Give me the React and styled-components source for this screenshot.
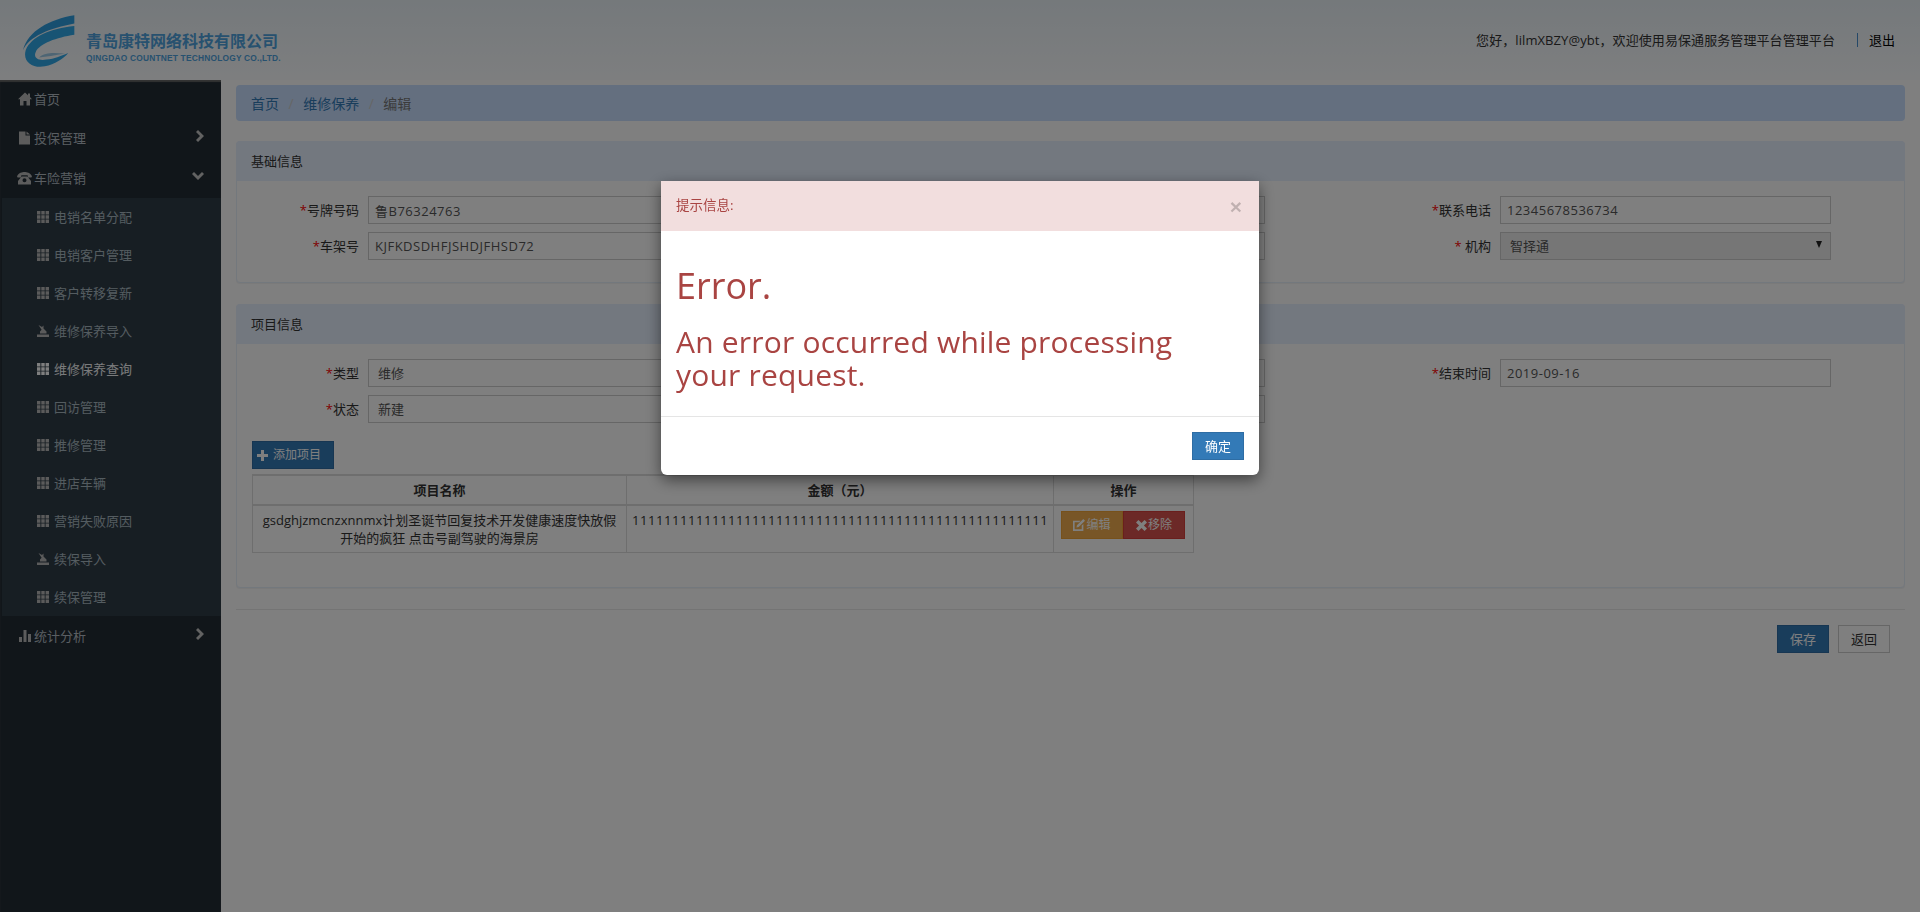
import React from 'react';
import styled, { createGlobalStyle } from 'styled-components';

const Global = createGlobalStyle`
  html, body { margin: 0; padding: 0; height: 100%; overflow: hidden; background: #fff; }
  * { box-sizing: border-box; }
  body { font: 13px/18px "Open Sans", "Noto Sans CJK SC", sans-serif; color: #333; }
`;

const Page = styled.div`height: 912px; display: flex; flex-direction: column;`;
const Header = styled.header`
  height: 80px; flex: none; display: flex; align-items: center; padding: 0 25px 0 23px;
  background: linear-gradient(#eaf2f7, #fbfdff);
`;
const LogoBox = styled.div`display: flex; align-items: center; gap: 11px; padding-top: 2px;`;
const LogoText = styled.div`display: flex; flex-direction: column; color: #4fa3df; font-weight: 700; padding-top: 11px;`;
const LogoCn = styled.span`font-size: 16px; line-height: 22px; white-space: nowrap;`;
const LogoEn = styled.span`font: 700 8.4px/12px "Liberation Sans", sans-serif; white-space: nowrap; letter-spacing: .2px;`;
const HeaderRight = styled.div`margin-left: auto; display: flex; align-items: center; white-space: nowrap;`;
const Greeting = styled.span`color: #333; letter-spacing: .08px;`;
const Divider = styled.span`width: 1px; height: 14px; background: #4a90d0; margin: 0 11px 0 22px;`;
const Logout = styled.a`color: #000;`;

const Body = styled.div`flex: 1; display: flex; min-height: 0;`;
const Sidebar = styled.nav`width: 221px; flex: none; background: #222c34; box-shadow: inset 0 2px 1px #666; color: #bcc6cc;`;
const TopItem = styled.div`
  height: ${p => p.$h}px; display: flex; align-items: center; padding: 0 17px 0 15px; position: relative;
  color: #b4bdc4;
`;
const TopIcon = styled.span`width: 19px; display: flex; justify-content: center; color: #b8b8b8;`;
const Chev = styled.span`margin-left: auto; display: flex; margin-top: -4px; color: #c4c4c4;`;
const SubMenu = styled.div`margin-left: 2px; background: #2f3d47;`;
const SubItem = styled.div`
  height: 38px; display: flex; align-items: center; padding-left: 35px; gap: 5px;
  color: ${p => (p.$active ? '#f4f6f8' : '#a9b8c0')};
`;
const SubIcon = styled.span`display: flex; color: ${p => (p.$active ? '#fff' : '#b6b6b6')};`;

const Main = styled.main`flex: 1; padding: 5px 15px 0; min-width: 0;`;
const Breadcrumb = styled.div`
  height: 36px; background: #c8dfff; border-radius: 4px; display: flex; align-items: center;
  padding: 1px 0 0 15px; font-size: 14px;
`;
const Crumb = styled.span`color: ${p => (p.$last ? '#777' : '#337ab7')};`;
const Slash = styled.span`color: #ccc; margin: 0 9.5px;`;
const Panel = styled.section`
  margin-top: ${p => p.$mt}px; border: 1px solid #e6f0fb; border-radius: 4px; background: #fefefe;
  box-shadow: 0 1px 1px rgba(0,0,0,.05);
`;
const PanelHead = styled.div`
  height: 40px; margin: -1px -1px 0; padding: 0 15px; display: flex; align-items: center;
  background: #e6f0ff; border-radius: 4px 4px 0 0; color: #333;
`;
const PanelBody = styled.div`padding: 15px 0 ${p => p.$pb}px 0;`;
const FormGrid = styled.div`display: grid; grid-template-columns: repeat(3, 566px); row-gap: 8px;`;
const Field = styled.label`display: flex; align-items: center; gap: 9px;`;
const Label = styled.span`width: 122px; flex: none; text-align: right; color: #333; white-space: pre;`;
const Star = styled.i`font-style: normal; color: #f00;`;
const Input = styled.input`
  width: 331px; height: 28px; border: 1px solid #ccc; background: #fff; padding: 0 6px;
  font: inherit; color: #555; outline: none; letter-spacing: .5px;
`;
const SelectBox = styled.div`
  width: 331px; height: 28px; border: 1px solid #ccc; padding: 0 9px; display: flex; align-items: center;
  background: ${p => (p.$gray ? '#ededed' : '#fff')}; color: #555; position: relative;
`;
const Caret = styled.span`
  margin-left: auto; margin-right: -1px; margin-top: -3px; width: 0; height: 0;
  border-left: 3px solid transparent; border-right: 3px solid transparent; border-top: 7px solid #222;
`;
const TableArea = styled.div`padding: 18px 15px 0;`;
const AddBtn = styled.button`
  width: 82px; height: 28px; border: 1px solid #2e6da4; background: #337ab7; color: #fff;
  font: 12px/18px "Open Sans", "Noto Sans CJK SC", sans-serif;
  display: flex; align-items: center; gap: 5px; padding: 0 4px; border-radius: 0;
`;
const Table = styled.table`
  margin-top: 5px; border-collapse: collapse; table-layout: fixed; width: 941px; border-top: 2px solid #ddd;
`;
const Th = styled.th`
  width: ${p => p.$w}px; height: 30px; padding: 0 5px; border: 1px solid #ddd; border-bottom-width: 2px; font-weight: 700; color: #333;
`;
const Td = styled.td`
  padding: 5px; border: 1px solid #ddd; text-align: ${p => p.$align || 'left'}; vertical-align: top; color: #333;
  overflow: hidden;
`;
const Digits = styled.div`white-space: nowrap; overflow: hidden; letter-spacing: .57px;`;
const BtnGroup = styled.div`display: flex; margin-left: 2px;`;
const RowBtn = styled.button`
  flex: none; width: 62px; height: 28px; border: 1px solid ${p => p.$border}; background: ${p => p.$bg}; color: #fff;
  font: 12px/18px "Open Sans", "Noto Sans CJK SC", sans-serif; padding: 0; display: flex; align-items: center; justify-content: center; gap: 1px;
`;
const Hr = styled.div`height: 1px; background: #e8e8e8; margin-top: 21px;`;
const Actions = styled.div`display: flex; justify-content: flex-end; gap: 9px; padding: 15px 15px 0 0;`;
const ActBtn = styled.button`
  width: 52px; height: 28px; font: inherit; border: 1px solid ${p => (p.$primary ? '#2e6da4' : '#ccc')};
  background: ${p => (p.$primary ? '#337ab7' : '#fff')}; color: ${p => (p.$primary ? '#fff' : '#333')};
  padding: 0;
`;

const Backdrop = styled.div`
  position: fixed; inset: 0; background: rgba(0,0,0,.5); display: flex; justify-content: center; padding-top: 181px;
`;
const Modal = styled.div`
  width: 598px; height: 294px; background: #fff; border-radius: 0 0 6px 6px; overflow: visible;
  box-shadow: 0 5px 15px rgba(0,0,0,.5);
`;
const ModalHead = styled.div`
  height: 50px; background: #f2dede; color: #a94442; display: flex; align-items: center; padding: 0 17px 2px 15px;
  font-size: 13.5px;
`;
const Close = styled.span`margin-left: auto; font: 700 21px/1 "Liberation Sans", sans-serif; color: #000; opacity: .2; margin-top: 2px;`;
const ModalBody = styled.div`padding: 15px; color: #a94442; height: 186px; border-bottom: 1px solid #e5e5e5;`;
const H1 = styled.h1`font-size: 36px; line-height: 39.6px; font-weight: 400; margin: 20px 0 20px;`;
const H2 = styled.h2`font-size: 30px; line-height: 33px; font-weight: 400; margin: -1px 0 10px; max-width: 530px; letter-spacing: .2px;`;
const ModalFoot = styled.div`display: flex; justify-content: flex-end; padding: 15px;`;
const OkBtn = styled.button`
  width: 52px; height: 28px; background: #337ab7; border: 1px solid #2e6da4; color: #fff; font: inherit; padding: 0;
`;

const Svg = ({ w = 14, h = 14, vb = '0 0 14 14', children }) => (
  <svg width={w} height={h} viewBox={vb} fill="currentColor">{children}</svg>
);
const HomeI = () => <Svg><path d="M7 0.5 L10 3.2 V1.5 H12 V5 L14 7.2 H12 V13.5 H8.5 V9 H5.5 V13.5 H2 V7.2 H0 Z" /></Svg>;
const FileI = () => <Svg w={11} h={14} vb="0 0 11 14"><path d="M0 0.5 H6.5 V4.5 H11 V13.5 H0 Z M7.5 0.5 L11 3.6 H7.5 Z" /></Svg>;
const PhoneI = () => <Svg w={15} h={13} vb="0 0 15 13"><path d="M0 4.2 C2 0.6 5 0 7.5 0 S13 0.6 15 4.2 L14.4 5.6 H11.2 L10.6 3.2 H4.4 L3.8 5.6 H0.6 Z M4.6 4.5 H10.4 L14 9 V12.6 H1 V9 Z M7.5 6.2 A2 2 0 1 0 7.5 10.2 A2 2 0 1 0 7.5 6.2" fillRule="evenodd" /></Svg>;
const ThI = () => (
  <Svg w={12} h={12} vb="0 0 12 12">
    <path d="M0 0h3.4v3.4H0zM4.3 0h3.4v3.4H4.3zM8.6 0H12v3.4H8.6zM0 4.3h3.4v3.4H0zM4.3 4.3h3.4v3.4H4.3zM8.6 4.3H12v3.4H8.6zM0 8.6h3.4V12H0zM4.3 8.6h3.4V12H4.3zM8.6 8.6H12V12H8.6z" />
  </Svg>
);
const ImportI = () => <Svg w={12} h={12} vb="0 0 12 12"><path d="M1.5 0 L5 2 L6.5 0.6 V3.5 L9.5 6.5 V8.5 H3 V6.5 L4.6 4.8 Z M0 9.5 H12 V12 H0 Z" /></Svg>;
const ChartI = () => <Svg w={12} h={12} vb="0 0 12 12"><path d="M0 7h3v5H0zM4.5 0h3v12h-3zM9 4h3v8H9z" /></Svg>;
const PlusI = () => <Svg w={11} h={11} vb="0 0 11 11"><path d="M4 0h3v4h4v3H7v4H4V7H0V4h4z" /></Svg>;
const EditI = () => <Svg w={12} h={12} vb="0 0 11 11"><path d="M0 1.5 H7 L5.6 3 H1.5 V9.5 H8 V6 L9.5 4.5 V11 H0 Z M9.4 0 L11 1.6 L5.2 7.4 L3.2 7.8 L3.6 5.8 Z" /></Svg>;
const XI = () => <Svg w={11} h={11} vb="0 0 10 10"><path d="M2.2 0 L5 2.8 L7.8 0 L10 2.2 L7.2 5 L10 7.8 L7.8 10 L5 7.2 L2.2 10 L0 7.8 L2.8 5 L0 2.2 Z" /></Svg>;
const ChevR = () => <Svg w={8} h={12} vb="0 0 8 12"><path d="M2 0 L8 6 L2 12 L0 10 L4 6 L0 2 Z" /></Svg>;
const ChevD = () => <Svg w={12} h={8} vb="0 0 12 8"><path d="M0 2 L2 0 L6 4 L10 0 L12 2 L6 8 Z" /></Svg>;

const Logo = () => (
  <svg width="52" height="52" viewBox="70 45 155 155">
    <path fill="#2f9fe0" d="M223 46 C150 58 85 92 70 150 C88 108 150 84 223 70 Z" />
    <path fill="#30a8e8" d="M223 78 C150 85 95 110 78 150 C68 185 100 205 135 198 C165 192 190 175 205 158 C180 168 165 175 140 178 C115 183 100 172 108 155 C120 130 170 112 223 104 Z" />
    <path fill="#9ccbe8" d="M118 172 C135 155 165 158 195 160 C165 165 140 170 118 172 Z" />
  </svg>
);

const sub = [
  ['电销名单分配', ThI], ['电销客户管理', ThI], ['客户转移复新', ThI], ['维修保养导入', ImportI],
  ['维修保养查询', ThI, true], ['回访管理', ThI], ['推修管理', ThI], ['进店车辆', ThI],
  ['营销失败原因', ThI], ['续保导入', ImportI], ['续保管理', ThI],
];

const TextField = ({ label, star = true, value }) => (
  <Field>
    <Label>{star && <Star>*</Star>}{label}</Label>
    <Input readOnly value={value} />
  </Field>
);
const SelectField = ({ label, value, gray, caret }) => (
  <Field>
    <Label><Star>*</Star>{label}</Label>
    <SelectBox $gray={gray}>{value}{caret && <Caret />}</SelectBox>
  </Field>
);

export default function App() {
  return (
    <Page>
      <Global />
      <Header>
        <LogoBox>
          <Logo />
          <LogoText>
            <LogoCn>青岛康特网络科技有限公司</LogoCn>
            <LogoEn>QINGDAO COUNTNET TECHNOLOGY CO.,LTD.</LogoEn>
          </LogoText>
        </LogoBox>
        <HeaderRight>
          <Greeting>您好，lilmXBZY@ybt，欢迎使用易保通服务管理平台管理平台</Greeting>
          <Divider />
          <Logout>退出</Logout>
        </HeaderRight>
      </Header>
      <Body>
        <Sidebar>
          <TopItem $h={38}><TopIcon><HomeI /></TopIcon>首页</TopItem>
          <TopItem $h={40}><TopIcon><FileI /></TopIcon>投保管理<Chev><ChevR /></Chev></TopItem>
          <TopItem $h={40}><TopIcon><PhoneI /></TopIcon>车险营销<Chev><ChevD /></Chev></TopItem>
          <SubMenu>
            {sub.map(([t, I, a]) => (
              <SubItem key={t} $active={a}><SubIcon $active={a}><I /></SubIcon>{t}</SubItem>
            ))}
          </SubMenu>
          <TopItem $h={40}><TopIcon><ChartI /></TopIcon>统计分析<Chev><ChevR /></Chev></TopItem>
        </Sidebar>
        <Main>
          <Breadcrumb>
            <Crumb>首页</Crumb><Slash>/</Slash>
            <Crumb>维修保养</Crumb><Slash>/</Slash>
            <Crumb $last>编辑</Crumb>
          </Breadcrumb>
          <Panel $mt={20}>
            <PanelHead>基础信息</PanelHead>
            <PanelBody $pb={22}>
              <FormGrid>
                <TextField label="号牌号码" value="鲁B76324763" />
                <TextField label="" value="" />
                <TextField label="联系电话" value="12345678536734" />
                <TextField label="车架号" value="KJFKDSDHFJSHDJFHSD72" />
                <TextField label="" value="" />
                <SelectField label=" 机构" value="智择通" gray caret />
              </FormGrid>
            </PanelBody>
          </Panel>
          <Panel $mt={21}>
            <PanelHead>项目信息</PanelHead>
            <PanelBody $pb={34}>
              <FormGrid>
                <SelectField label="类型" value="维修" />
                <TextField label="" value="" />
                <TextField label="结束时间" value="2019-09-16" />
                <SelectField label="状态" value="新建" />
                <TextField label="" value="" />
              </FormGrid>
              <TableArea>
                <AddBtn><PlusI />添加项目</AddBtn>
                <Table>
                  <thead>
                    <tr>
                      <Th $w={374}>项目名称</Th>
                      <Th $w={427}>金额（元）</Th>
                      <Th $w={140}>操作</Th>
                    </tr>
                  </thead>
                  <tbody>
                    <tr>
                      <Td $align="center">gsdghjzmcnzxnnmx计划圣诞节回复技术开发健康速度快放假开始的疯狂 点击号副驾驶的海景房</Td>
                      <Td><Digits>{'1'.repeat(52)}</Digits></Td>
                      <Td>
                        <BtnGroup>
                          <RowBtn $bg="#f0ad4e" $border="#eea236"><EditI />编辑</RowBtn>
                          <RowBtn $bg="#d9534f" $border="#d43f3a"><XI />移除</RowBtn>
                        </BtnGroup>
                      </Td>
                    </tr>
                  </tbody>
                </Table>
              </TableArea>
            </PanelBody>
          </Panel>
          <Hr />
          <Actions>
            <ActBtn $primary>保存</ActBtn>
            <ActBtn>返回</ActBtn>
          </Actions>
        </Main>
      </Body>
      <Backdrop>
        <Modal>
          <ModalHead>提示信息:<Close>×</Close></ModalHead>
          <ModalBody>
            <H1>Error.</H1>
            <H2>An error occurred while processing your request.</H2>
          </ModalBody>
          <ModalFoot><OkBtn>确定</OkBtn></ModalFoot>
        </Modal>
      </Backdrop>
    </Page>
  );
}
